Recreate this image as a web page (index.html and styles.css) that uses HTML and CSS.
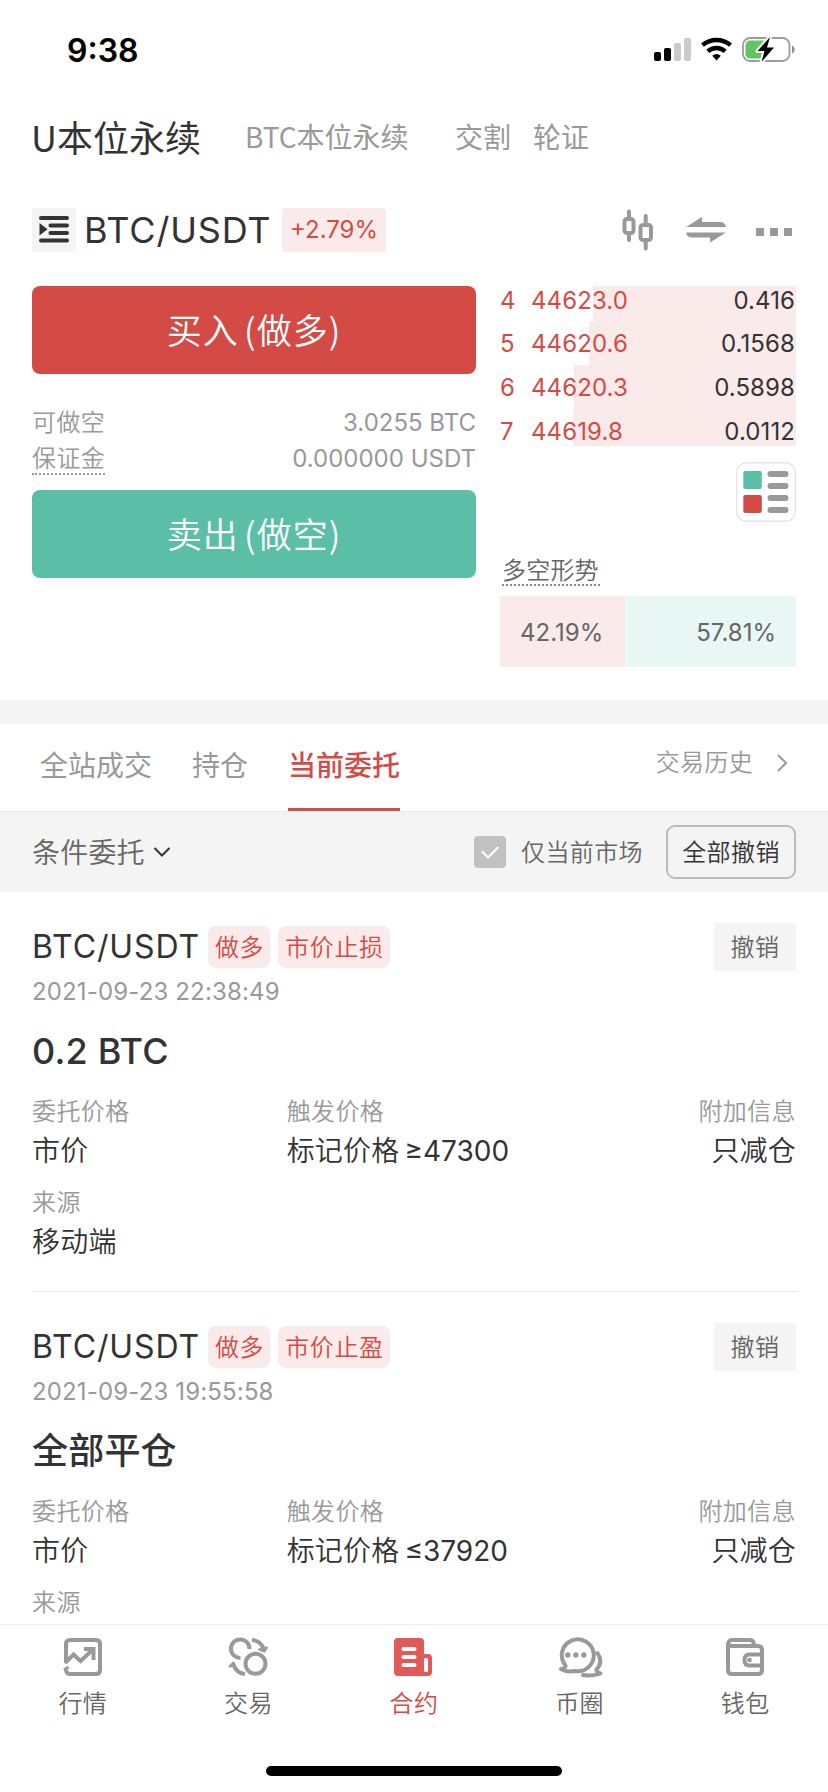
FILE: index.html
```html
<!DOCTYPE html>
<html lang="zh-CN">
<head>
<meta charset="utf-8">
<title>U本位永续</title>
<link rel="stylesheet" href="styles.css">
</head>
<body>
<div class="app">
  <header class="status">
    <span class="clock">9:38</span>
    <svg class="status-icons" width="144" height="28" viewBox="0 0 144 28">
      <rect x="1" y="15" width="7" height="9" rx="2"/>
      <rect x="11" y="11" width="7" height="13" rx="2"/>
      <rect x="21" y="6" width="7" height="18" rx="2" fill="#cbcbcb"/>
      <rect x="31" y="1" width="7" height="23" rx="2" fill="#cbcbcb"/>
      <g fill="none" stroke="#000" stroke-width="4.4">
        <path d="M49.5 8.2a21.500 21.500 0 0 1 28 0"/>
        <path d="M54.800 14.300a13.200 13.200 0 0 1 17.400 0"/>
      </g>
      <path d="M59.200 18.700q4.300-3.400 8.600 0L63.500 23.500z"/>
      <rect x="90" y="1" width="46.500" height="23" rx="7" fill="none" stroke="#9c9c9c" stroke-width="1.800"/>
      <rect x="92.500" y="3.500" width="22" height="18" rx="4.500" fill="#62c462"/>
      <path d="M139 8.500c3.600 1.500 3.600 6.500 0 8z" fill="#8e8e8e"/>
      <path d="M117 0L104.500 14h7L108.500 25 121 10.500h-7z" stroke="#fff" stroke-width="4" stroke-linejoin="round" paint-order="stroke"/>
    </svg>
  </header>

  <nav class="markets">
    <span class="market-active">U本位永续</span>
    <span class="market-btc">BTC本位永续</span>
    <span class="market-delivery">交割</span>
    <span>轮证</span>
  </nav>

  <section class="pair">
    <span class="drawer">
      <svg width="44" height="44" viewBox="0 0 44 44">
        <g stroke="#333" stroke-width="4" stroke-linecap="round">
          <path d="M9 10h26M18.500 17.500H35M18.500 25H35M9 32.500h26"/>
        </g>
        <path d="M7.500 15l8 6.200-8 6.300z" fill="#333"/>
      </svg>
    </span>
    <h1 class="pair-name">BTC/USDT</h1>
    <span class="change">+2.79%</span>
    <div class="pair-tools">
      <svg width="34" height="42" viewBox="0 0 34 42" fill="none" stroke="#999" stroke-width="4" stroke-linecap="round">
        <rect x="2.500" y="10" width="9" height="14" rx="2.500"/>
        <path d="M7 2.500v7M7 25v6"/>
        <rect x="18.500" y="16" width="10.500" height="15" rx="2.500"/>
        <path d="M23.700 7v8M23.700 32v7.500"/>
      </svg>
      <svg class="swap" width="40" height="26" viewBox="0 0 40 26" fill="#999">
        <path d="M0 10L16 0v5h18q5 0 6 5z"/>
        <path d="M0 15.500h40L24 25.500v-5H6q-5 0-6-5z"/>
      </svg>
      <svg class="more" width="36" height="8" viewBox="0 0 36 8" fill="#999">
        <path d="M0 0h8v8H0zM14 0h8v8h-8zM28 0h8v8h-8z"/>
      </svg>
    </div>
  </section>

  <main class="trade">
    <div class="order-form">
      <button class="action buy">买入 (做多)</button>
      <dl class="margin">
        <div class="margin-row"><dt>可做空</dt><dd>3.0255 BTC</dd></div>
        <div class="margin-row"><dt class="hint">保证金</dt><dd>0.000000 USDT</dd></div>
      </dl>
      <button class="action sell">卖出 (做空)</button>
    </div>
    <div class="depth">
      <div class="book">
        <div class="level d4"><span>4</span><span>44623.0</span><b>0.416</b></div>
        <div class="level d5"><span>5</span><span>44620.6</span><b>0.1568</b></div>
        <div class="level d6"><span>6</span><span>44620.3</span><b>0.5898</b></div>
        <div class="level d7"><span>7</span><span>44619.8</span><b>0.0112</b></div>
      </div>
      <svg class="view-mode" width="60" height="60" viewBox="0 0 60 60">
        <rect x=".75" y=".75" width="58.500" height="58.500" rx="9.500" fill="#fff" stroke="#e4e4e8" stroke-width="1.300"/>
        <rect x="7.300" y="9" width="18.500" height="18" rx="2" fill="#5abfa6"/>
        <rect x="7.300" y="33" width="18.500" height="18" rx="2" fill="#d44a45"/>
        <path d="M34.500 12h15M34.500 24h15M34.500 36h15M34.500 48h15" stroke="#999" stroke-width="6" stroke-linecap="round"/>
      </svg>
      <div class="trend-title">多空形势</div>
      <div class="trend"><span class="long">42.19%</span><span class="short">57.81%</span></div>
    </div>
  </main>

  <nav class="tabs">
    <span class="tab">全站成交</span>
    <span class="tab">持仓</span>
    <span class="tab tab-on">当前委托</span>
    <span class="history">交易历史
      <svg width="12" height="20" viewBox="0 0 12 20" fill="none" stroke="#999" stroke-width="2"><path d="M2 2l8 8-8 8"/></svg>
    </span>
  </nav>

  <div class="filters">
    <span class="filter-type">条件委托</span>
    <svg class="caret" width="18" height="12" viewBox="0 0 18 12" fill="none" stroke="#333" stroke-width="2"><path d="M1.500 2l7.500 7.500L16.500 2"/></svg>
    <svg class="check" width="32" height="32" viewBox="0 0 32 32"><rect width="32" height="32" rx="4" fill="#c1c1c1"/><path d="M8 15.500l6 6L24.500 11" fill="none" stroke="#fff" stroke-width="2.200"/></svg>
    <span class="only">仅当前市场</span>
    <button class="cancel-all">全部撤销</button>
  </div>

  <div class="orders">
    <article class="order">
      <div class="order-head">
        <h2>BTC/USDT</h2><span class="tag">做多</span><span class="tag">市价止损</span>
        <button class="cancel">撤销</button>
      </div>
      <time>2021-09-23 22:38:49</time>
      <div class="amount">0.2 BTC</div>
      <div class="fields">
        <div><label>委托价格</label><p>市价</p></div>
        <div><label>触发价格</label><p class="trigger">标记价格<i>≥47300</i></p></div>
        <div class="field-end"><label>附加信息</label><p>只减仓</p></div>
        <div><label>来源</label><p>移动端</p></div>
      </div>
    </article>
    <article class="order">
      <div class="order-head">
        <h2>BTC/USDT</h2><span class="tag">做多</span><span class="tag">市价止盈</span>
        <button class="cancel">撤销</button>
      </div>
      <time>2021-09-23 19:55:58</time>
      <div class="amount">全部平仓</div>
      <div class="fields">
        <div><label>委托价格</label><p>市价</p></div>
        <div><label>触发价格</label><p class="trigger">标记价格<i>≤37920</i></p></div>
        <div class="field-end"><label>附加信息</label><p>只减仓</p></div>
        <div><label>来源</label></div>
      </div>
    </article>
  </div>

  <footer class="dock">
    <a class="dock-item">
      <svg width="48" height="42" viewBox="0 0 48 42" fill="none" stroke="#999" stroke-width="4">
        <path d="M7 27V8q0-4 4-4h26q4 0 4 4v26q0 4-4 4H11q-3.500 0-4-4"/>
        <path d="M6 27l8.500-8.500 7 6.500L34 13.500"/>
        <path d="M25 13h9.500v11"/>
        <path d="M5 34l4.500-3" stroke-width="3"/>
      </svg>
      行情
    </a>
    <a class="dock-item">
      <svg width="48" height="42" viewBox="0 0 48 42" fill="none" stroke="#999" stroke-width="4">
        <circle cx="31.500" cy="27.800" r="10"/>
        <path d="M16.500 22A9.300 9.300 0 1 1 25.500 13"/>
        <path d="M28 4q9 .5 11.500 9"/>
        <path d="M21 38q-8-.5-11.500-9"/>
        <path d="M35 13.500l8-2-2.500 4z" fill="#999" stroke-width="2" stroke="#999" stroke-linejoin="round"/>
        <path d="M5.500 30.500l4-4 1.500 3z" fill="#999" stroke-width="2" stroke="#999" stroke-linejoin="round"/>
      </svg>
      交易
    </a>
    <a class="dock-item dock-on">
      <svg width="48" height="42" viewBox="0 0 48 42">
        <path d="M8 2h20q4 0 4 4v12h4q4 0 4 4v14q0 4-4 4H6q-4 0-4-4V6q0-4 4-4z" transform="translate(2)" fill="#e05a57"/>
        <path d="M13.500 13h11M13.500 21h11M13.500 29h11" stroke="#fff" stroke-width="4" stroke-linecap="round"/>
        <rect x="34" y="22" width="4" height="14" rx="1.500" fill="#fff"/>
      </svg>
      合约
    </a>
    <a class="dock-item">
      <svg width="48" height="42" viewBox="0 0 48 42" fill="none" stroke="#999" stroke-width="4" stroke-linecap="round" stroke-linejoin="round">
        <path d="M5 33q5-.5 4.500-3.500A16 16 0 1 1 19 35q-8 1.500-14-2z"/>
        <path d="M41.500 17q6 9-1 16.500 0 3.500 4 4-8 3-17.500 1.500"/>
        <g fill="#999" stroke="none"><circle cx="11.800" cy="19" r="2.700"/><circle cx="19.800" cy="19" r="2.700"/><circle cx="27.800" cy="19" r="2.700"/></g>
      </svg>
      币圈
    </a>
    <a class="dock-item">
      <svg width="48" height="42" viewBox="0 0 48 42" fill="none" stroke="#999" stroke-width="4">
        <path d="M7 10v24q0 4 4 4h26q4 0 4-4V14q0-4-4-4H7q0-6 4-6h18q4 0 4 6"/>
        <path d="M41 18.500H28.500q-5 0-5 5.500t5 5.500H41"/>
        <circle cx="28.500" cy="24" r="2.300" fill="#999" stroke="none"/>
      </svg>
      钱包
    </a>
    <div class="home-bar"></div>
  </footer>
</div>
</body>
</html>
```
FILE: styles.css
```css
* { box-sizing: border-box; margin: 0; padding: 0; }

body {
  width: 828px;
  height: 1792px;
  overflow: hidden;
  background: #fff;
  color: #333;
  font: 350 24px/36px Inter, "Noto Sans CJK SC", sans-serif;
  letter-spacing: .4px;
}

svg { display: block; flex: none; }
button { border: 0; background: none; font: inherit; color: inherit; letter-spacing: inherit; }

.app { display: flex; flex-direction: column; height: 1792px; }

.status { display: flex; justify-content: space-between; height: 98px; padding: 31px 31px 0 67px; }
.clock { font-size: 32px; line-height: 40px; font-weight: 600; color: #000; letter-spacing: 0; }
.status-icons { margin-top: 6px; }

.markets {
  display: flex;
  align-items: center;
  height: 76px;
  padding: 0 32px;
  font-family: "Noto Sans CJK SC", sans-serif;
  font-size: 28px;
  font-weight: 400;
  letter-spacing: 0;
  color: #999;
}
.market-active { width: 214px; margin-left: -1px; font-size: 36px; color: #333; }
.market-btc { width: 210px; }
.market-delivery { width: 78px; }

.pair { display: flex; align-items: center; height: 112px; padding: 0 32px; }
.drawer { background: #f4f4f4; border-radius: 4px; }
.pair-name { margin-left: 8px; width: 198px; font-size: 36px; font-weight: 400; letter-spacing: .8px; white-space: nowrap; }
.change { width: 104px; height: 44px; line-height: 44px; text-align: center; border-radius: 4px; background: #faeaea; color: #d44a45; font-weight: 400; letter-spacing: 0; }
.pair-tools { display: flex; align-items: center; margin-left: auto; padding-right: 4px; }
.swap { margin-left: 30px; }
.more { margin: 3px 0 0 30px; }

.trade { display: grid; grid-template-columns: 444px 296px; gap: 24px; height: 414px; padding: 0 32px; }
.action { display: block; width: 444px; height: 88px; padding-bottom: 2px; border-radius: 8px; color: #fff; font-family: "Noto Sans CJK SC", sans-serif; font-size: 35px; letter-spacing: 1px; word-spacing: -3.5px; }
.buy { background: #d44a45; }
.sell { background: #5abfa6; }
.margin { height: 116px; padding-top: 31px; color: #999; }
.margin-row { display: flex; justify-content: space-between; height: 36px; }
.margin-row dd { font-weight: 400; letter-spacing: 0; }
.hint { height: 34px; border-bottom: 2px dotted #999; }

.book { height: 160px; }
.level { display: flex; height: 44px; padding-top: 1px; line-height: 43px; color: #d44a45; font-weight: 400; letter-spacing: .1px; }
.level span:first-child { width: 31px; }
.level b { margin-left: auto; padding-right: 1px; font-weight: 400; color: #333; }
.level.d4 { height: 35px; line-height: 27px; }
.level.d7 { height: 37px; padding-top: 8px; line-height: 29px; }
.d4 { background: linear-gradient(90deg, transparent 93px, #faeaea 93px); }
.d5 { background: linear-gradient(90deg, transparent 89px, #faeaea 89px); }
.d6 { background: linear-gradient(90deg, transparent 74px, #faeaea 74px); }
.d7 { background: linear-gradient(90deg, transparent 73px, #faeaea 73px); }
.view-mode { margin: 16px 0 30px auto; }
.trend-title { width: 98px; height: 34px; line-height: 38px; margin-left: 2px; border-bottom: 2px dotted #888; color: #666; white-space: nowrap; letter-spacing: .2px; }
.trend { display: flex; margin-top: 10px; height: 71px; line-height: 74px; color: #666; font-weight: 400; letter-spacing: 0; }
.long { width: 125px; padding-left: 20px; background: #faeaea; }
.short { flex: 1; padding-right: 20px; text-align: right; background: #e8f7f4; }

.tabs { display: flex; height: 112px; padding: 0 32px 0 40px; border-top: 24px solid #f4f4f4; border-bottom: 1px solid #e6e6e6; font-size: 28px; font-weight: 400; letter-spacing: 0; color: #999; }
.tab { height: 87px; line-height: 85px; margin-right: 40px; }
.tab-on { color: #d44a45; font-weight: 500; border-bottom: 3px solid #c9514c; }
.history { display: flex; align-items: center; gap: 23px; height: 78px; margin-left: auto; padding-right: 8px; font-size: 24px; font-weight: 350; letter-spacing: .3px; }

.filters { display: flex; align-items: center; height: 80px; padding: 0 32px; background: #f4f4f4; color: #666; }
.filter-type { padding-top: 2px; font-size: 28px; letter-spacing: .2px; }
.caret { margin-left: 8px; }
.check { margin-left: auto; }
.only { margin: 0 23px 0 15px; padding-top: 2px; }
.cancel-all { width: 130px; height: 54px; padding-top: 2px; border: 2px solid #bbb; border-radius: 9px; color: #333; }

.orders { flex: 1; min-height: 0; overflow: hidden; padding: 0 32px; }
.order { height: 400px; padding-top: 31px; border-bottom: 1px solid #e6e6e6; }
.order-head { display: flex; align-items: center; height: 48px; }
.order-head h2 { width: 176px; font-size: 32px; font-weight: 400; letter-spacing: .9px; white-space: nowrap; }
.tag { height: 42px; line-height: 44px; margin-right: 8px; padding: 0 6px 0 7px; border-radius: 8px; background: #faeaea; color: #d44a45; letter-spacing: .6px; }
.cancel { width: 82px; height: 48px; padding-top: 2px; margin-left: auto; background: #f4f4f4; color: #666; }
.order time { display: block; line-height: 42px; color: #999; font-weight: 400; letter-spacing: .15px; }
.amount { height: 76px; line-height: 76px; font-size: 36px; font-weight: 500; letter-spacing: .2px; }
.fields { display: grid; grid-template-columns: 1fr 1fr 1fr; row-gap: 13px; }
.fields label { display: block; line-height: 46px; color: #999; }
.fields p { padding-top: 1px; line-height: 31px; font-size: 28px; white-space: nowrap; letter-spacing: .2px; }
.trigger i { font-style: normal; font-weight: 400; margin-left: 5px; letter-spacing: 0; }
.field-end { text-align: right; }

.dock { position: relative; display: grid; grid-template-columns: repeat(5, 1fr); height: 168px; padding-top: 11px; border-top: 1px solid #ebebeb; background: #fff; }
.dock-item { display: flex; flex-direction: column; align-items: center; gap: 8px; color: #666; }
.dock-on { color: #d44a45; }
.home-bar { position: absolute; left: 266px; bottom: 16px; width: 296px; height: 10px; border-radius: 5px; background: #000; }
```
